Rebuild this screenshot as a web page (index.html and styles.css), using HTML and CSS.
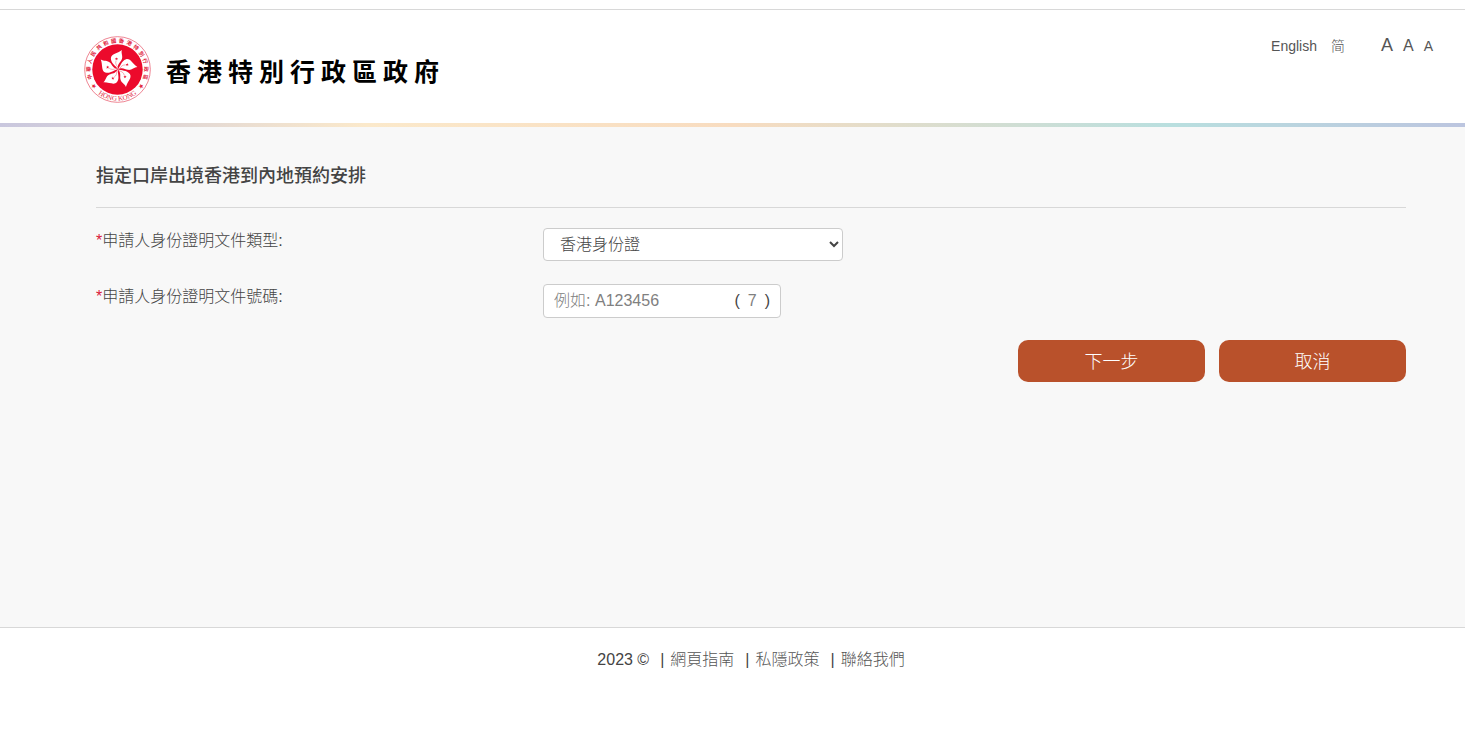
FILE: index.html
```html
<!DOCTYPE html>
<html lang="zh-HK">
  <head>
    <meta charset="UTF-8" />
    <meta name="viewport" content="width=device-width, initial-scale=1.0" />
    <title>指定口岸出境香港到內地預約安排</title>
    <link rel="stylesheet" href="styles.css">
  </head>
  <body>
    <header class="header">
      <div class="brand">
        <svg class="emblem" viewBox="0 0 202 202" aria-hidden="true">
          <defs>
            <path id="bottom-arc" d="M7 101 A94 94 0 0 0 195 101" />
            <g id="petal">
              <path d="M0 0 C-5 -10 -21 -17 -21 -33 C-20 -47 -1 -47 12 -58 C9 -48 17 -38 11 -28 C7 -20 -2 -16 0 0 Z" fill="#fff" />
              <path d="M0 -6 C-6 -13 -8 -19 -5 -26" fill="none" stroke="#ec0a2c" stroke-width="1" />
              <path d="M-4 -36 l1 3 4 0 -3 2 1 4 -3 -2 -3 2 1 -4 -3 -2 4 0 Z" fill="#ec0a2c" />
            </g>
          </defs>
          <circle cx="101" cy="101" r="99" fill="#fff" stroke="#e5485c" stroke-width="2" />
          <circle cx="101" cy="101" r="76" fill="#ec0a2c" />
          <g transform="translate(102 100)">
            <use href="#petal" />
            <use href="#petal" transform="rotate(72)" />
            <use href="#petal" transform="rotate(144)" />
            <use href="#petal" transform="rotate(216)" />
            <use href="#petal" transform="rotate(288)" />
          </g>
          <g class="emblem-text">
            <text x="101" y="20" transform="rotate(-105 101 101)">中</text>
            <text x="101" y="20" transform="rotate(-89 101 101)">華</text>
            <text x="101" y="20" transform="rotate(-73 101 101)">人</text>
            <text x="101" y="20" transform="rotate(-57 101 101)">民</text>
            <text x="101" y="20" transform="rotate(-40 101 101)">共</text>
            <text x="101" y="20" transform="rotate(-24 101 101)">和</text>
            <text x="101" y="20" transform="rotate(-8 101 101)">國</text>
            <text x="101" y="20" transform="rotate(8 101 101)">香</text>
            <text x="101" y="20" transform="rotate(24 101 101)">港</text>
            <text x="101" y="20" transform="rotate(40 101 101)">特</text>
            <text x="101" y="20" transform="rotate(57 101 101)">別</text>
            <text x="101" y="20" transform="rotate(73 101 101)">行</text>
            <text x="101" y="20" transform="rotate(89 101 101)">政</text>
            <text x="101" y="20" transform="rotate(105 101 101)">區</text>
            <text x="101" y="19" transform="rotate(-125 101 101)">★</text>
            <text x="101" y="19" transform="rotate(125 101 101)">★</text>
          </g>
          <text class="emblem-latin"><textPath href="#bottom-arc" startOffset="50%">HONG KONG</textPath></text>
        </svg>
        <span class="brand-name">香港特別行政區政府</span>
      </div>
      <nav class="tools">
        <a href="#">English</a>
        <a href="#" lang="zh-CN">简</a>
        <div class="text-size">
          <button type="button" class="size-l" aria-label="最大字型">A</button>
          <button type="button" class="size-m" aria-label="較大字型">A</button>
          <button type="button" class="size-s" aria-label="預設字型">A</button>
        </div>
      </nav>
    </header>
    <div class="rainbow"></div>

    <main class="content">
      <h1>指定口岸出境香港到內地預約安排</h1>
      <form>
        <div class="row">
          <label for="doc-type"><span class="required">*</span>申請人身份證明文件類型:</label>
          <select id="doc-type" class="doc-type">
            <option>香港身份證</option>
          </select>
        </div>
        <div class="row">
          <label for="doc-no"><span class="required">*</span>申請人身份證明文件號碼:</label>
          <div class="doc-no">
            <input type="text" id="doc-no" placeholder="例如: A123456" maxlength="8">
            <span>(</span>
            <input type="text" class="check-digit" placeholder="7" maxlength="1" aria-label="括號內數字">
            <span>)</span>
          </div>
        </div>
        <div class="actions">
          <button type="submit">下一步</button>
          <button type="button">取消</button>
        </div>
      </form>
    </main>

    <footer class="footer">
      <span>2023 ©</span>
      <span class="link">| <a href="#">網頁指南</a></span>
      <span class="link">| <a href="#">私隱政策</a></span>
      <span class="link">| <a href="#">聯絡我們</a></span>
    </footer>
  </body>
</html>
```
FILE: styles.css
```css
* {
  box-sizing: border-box;
}
body {
  margin: 0;
  padding-top: 9px;
  min-height: 100vh;
  display: flex;
  flex-direction: column;
  background-color: white;
  color: #444;
  font-family: "Liberation Sans", "Noto Sans CJK TC", sans-serif;
  font-size: 16px;
  font-weight: 300;
  line-height: 24px;
}
a {
  color: #555;
  text-decoration: none;
}
button, input, select {
  font: inherit;
  color: inherit;
}

/* Header */
.header {
  border-top: 1px solid #d8d8d8;
  padding: 26px 32px 20px 84px;
  display: flex;
  justify-content: space-between;
  align-items: flex-start;
}
.brand {
  display: flex;
  align-items: center;
  gap: 15px;
}
.emblem {
  width: 67px;
  height: 67px;
}
.emblem-text {
  fill: #e0233d;
  font-family: "Noto Sans CJK TC", sans-serif;
  font-size: 16px;
  font-weight: 700;
  text-anchor: middle;
}
.emblem-latin {
  fill: #e0233d;
  font-family: "Liberation Serif", serif;
  font-size: 21px;
  font-weight: 400;
  text-anchor: middle;
}
.brand-name {
  padding-top: 4px;
  color: black;
  font-size: 25px;
  font-weight: 700;
  letter-spacing: 6px;
  line-height: 36px;
}
.tools {
  display: flex;
  align-items: baseline;
  gap: 14px;
  font-size: 14px;
  line-height: 18px;
}
.text-size {
  display: flex;
  align-items: baseline;
  gap: 10px;
  margin-left: 22px;
}
.text-size button {
  border: 0;
  padding: 0;
  background: none;
  color: #555;
  cursor: pointer;
}
.text-size .size-l {
  font-size: 18px;
}
.text-size .size-m {
  font-size: 16px;
}
.text-size .size-s {
  font-size: 14px;
}
.rainbow {
  height: 4px;
  background: linear-gradient(to right, #c9c7de, #fbe9cb 25%, #f8dcc0 50%, #b9dfdf 80%, #bcc5df);
}

/* Form */
.content {
  flex: 1;
  padding: 37px 59px 36px 96px;
  background-color: #f8f8f8;
}
h1 {
  margin: 0 0 20px;
  padding-bottom: 19px;
  border-bottom: 1px solid #d8d8d8;
  font-size: 18px;
  font-weight: 500;
  line-height: 24px;
}
.row {
  display: grid;
  grid-template-columns: 1fr 1.93fr;
  align-items: start;
  min-height: 34px;
  margin-bottom: 22px;
}
.row label {
  padding-top: 1px;
}
.required {
  color: #d9203a;
}
.doc-type {
  width: 300px;
  height: 33px;
  padding: 0 12px;
  border: 1px solid #ccc;
  border-radius: 4px;
  background-color: white;
}
.doc-no {
  display: flex;
  align-items: center;
  width: 238px;
  height: 34px;
  padding: 0 10px;
  border: 1px solid #ccc;
  border-radius: 4px;
  background-color: white;
}
.doc-no input {
  flex: 1;
  min-width: 0;
  padding: 0;
  border: 0;
  outline: 0;
  background: none;
}
.doc-no .check-digit {
  flex: none;
  width: 25px;
  text-align: center;
}
.doc-no input::placeholder {
  color: #808080;
  opacity: 1;
}
.actions {
  display: flex;
  justify-content: flex-end;
  gap: 14px;
}
.actions button {
  width: 187px;
  height: 42px;
  padding: 2px 0 0;
  border: 0;
  border-radius: 10px;
  background-color: #b9512b;
  color: white;
  font-size: 18px;
  cursor: pointer;
}

/* Footer */
.footer {
  display: flex;
  justify-content: center;
  gap: 11px;
  height: 110px;
  padding: 20px 59px 0 96px;
  border-top: 1px solid #d8d8d8;
}
.footer .link {
  display: flex;
  gap: 6px;
}
```
